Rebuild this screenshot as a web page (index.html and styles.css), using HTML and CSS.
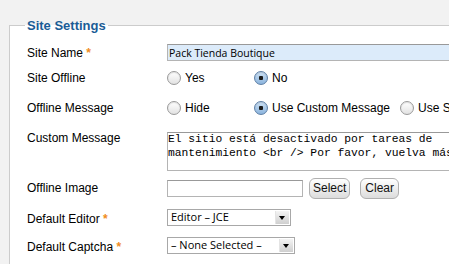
FILE: index.html
```html
<!DOCTYPE html>
<html lang="es">
  <head>
    <meta charset="utf-8">
    <title>Global Configuration</title>
    <link rel="stylesheet" href="styles.css">
  </head>
  <body>
    <form class="config">
      <fieldset class="settings">
        <legend>Site Settings</legend>

        <div class="field field-text">
          <label for="sitename">Site Name <span class="star">*</span></label>
          <input id="sitename" class="input-wide" type="text" value="Pack Tienda Boutique">
        </div>

        <div class="field field-radio">
          <label>Site Offline</label>
          <div class="options">
            <label class="option"><input type="radio" name="offline"> Yes</label>
            <label class="option"><input type="radio" name="offline" checked> No</label>
          </div>
        </div>

        <div class="field field-radio">
          <label>Offline Message</label>
          <div class="options">
            <label class="option"><input type="radio" name="display_offline_message"> Hide</label>
            <label class="option option-long"><input type="radio" name="display_offline_message" checked> Use Custom Message</label>
            <label class="option"><input type="radio" name="display_offline_message"> Use Site Language Default Message</label>
          </div>
        </div>

        <div class="field field-area">
          <label for="offline-message">Custom Message</label>
          <textarea id="offline-message" rows="3">El sitio está desactivado por tareas de mantenimiento &lt;br /&gt; Por favor, vuelva más tarde.</textarea>
        </div>

        <div class="field field-media">
          <label for="offline-image">Offline Image</label>
          <input id="offline-image" class="input-media" type="text">
          <button type="button" class="btn">Select</button>
          <button type="button" class="btn">Clear</button>
        </div>

        <div class="field field-select">
          <label for="editor">Default Editor <span class="star">*</span></label>
          <div class="select select-editor">
            <span>Editor – JCE</span>
            <i class="arrow"></i>
          </div>
        </div>

        <div class="field field-select field-last">
          <label for="captcha">Default Captcha <span class="star">*</span></label>
          <div class="select select-captcha">
            <span>– None Selected –</span>
            <i class="arrow"></i>
          </div>
        </div>
      </fieldset>
    </form>
  </body>
</html>
```

FILE: styles.css
```css
html,
body {
  margin: 0;
  overflow: hidden;
}

body {
  background-color: #f2f2f2;
  font-family: "Liberation Sans", Arial, sans-serif;
  font-size: 12px;
  color: #000;
}

.config {
  padding: 18px 0 0 9px;
}

.settings {
  width: 620px;
  margin: 0;
  padding: 6px 17px 30px;
  border: 1px solid #cccccc;
  background-color: #fff;
}

.settings legend {
  margin-left: -2px;
  padding: 0 2px;
  font-size: 13px;
  font-weight: bold;
  line-height: 15px;
  color: #1a5c96;
}

.field {
  display: flex;
  align-items: center;
}

.field > label {
  flex: none;
  width: 140px;
  line-height: 14px;
}

.star {
  color: #f08c1e;
  font-weight: bold;
}

/* rows */
.field-text {
  height: 19px;
  margin: 4px 0 1px;
}

.field-radio {
  height: 30px;
}

.field-area {
  align-items: flex-start;
  padding-top: 9px;
}

.field-area > label {
  margin-top: -1px;
}

.field-media {
  height: 22px;
  margin-top: 6px;
}

.field-select {
  height: 18px;
  margin-top: 9px;
}

.field-select > label {
  margin-top: 3px;
}

.field-last {
  margin-top: 10px;
}

/* controls */
input[type="text"],
textarea {
  box-sizing: border-box;
  margin: 0;
  border: 1px solid #b4b4b4;
  border-top-color: #999;
  font-family: "Open Sans", "Liberation Sans", sans-serif;
  font-size: 10.5px;
}

.input-wide {
  width: 420px;
  height: 17px;
  padding: 0 1px;
  background-color: #dcebfa;
}

textarea {
  width: 350px;
  height: 39px;
  padding: 0;
  resize: none;
  overflow: hidden;
  font-family: "Liberation Mono", "Courier New", monospace;
  font-size: 11.3px;
  line-height: 13.5px;
}

.input-media {
  width: 136px;
  height: 17px;
  margin-top: 1px;
  background-color: #fff;
}

.options {
  display: flex;
  align-items: center;
  white-space: nowrap;
}

.option {
  display: flex;
  align-items: center;
  flex: none;
  gap: 4px;
  width: 87px;
}

.option-long {
  width: 146px;
}

input[type="radio"] {
  appearance: none;
  flex: none;
  box-sizing: border-box;
  width: 14px;
  height: 14px;
  margin: 0;
  border: 1px solid #9a9a9a;
  border-radius: 50%;
  background: linear-gradient(#ffffff, #e2e2e2);
  box-shadow: inset 0 1px 1px rgba(0, 0, 0, 0.12);
}

input[type="radio"]:checked {
  border-color: #5d7fa6;
  background:
    radial-gradient(circle, #1b1b1b 0 2px, transparent 2.5px),
    linear-gradient(#cfe3f6, #8ab3dc);
}

.btn {
  box-sizing: border-box;
  height: 21px;
  margin: 0 0 0 6px;
  padding: 0 3px;
  border: 1px solid #b0b0b0;
  border-radius: 6px;
  background: linear-gradient(#ffffff, #dcdcdc);
  font-family: "Liberation Sans", Arial, sans-serif;
  font-size: 12px;
  color: #111;
}

.btn + .btn {
  margin-left: 10px;
  padding: 0 4px;
}

.select {
  box-sizing: border-box;
  display: flex;
  align-items: center;
  justify-content: space-between;
  height: 17px;
  padding: 0 1px 0 3px;
  border: 1px solid #a8a8a8;
  background-color: #fff;
  font-family: "Open Sans", "Liberation Sans", sans-serif;
  font-size: 11px;
  line-height: 14px;
}

.select-editor {
  width: 124px;
}

.select-captcha {
  width: 128px;
}

.arrow {
  position: relative;
  width: 13px;
  height: 13px;
  background: linear-gradient(#f4f4f4, #cfcfcf);
  border-left: 1px solid #e4e4e4;
}

.arrow::after {
  content: "";
  position: absolute;
  left: 3px;
  top: 5px;
  border-left: 3.5px solid transparent;
  border-right: 3.5px solid transparent;
  border-top: 4px solid #000;
}
```
